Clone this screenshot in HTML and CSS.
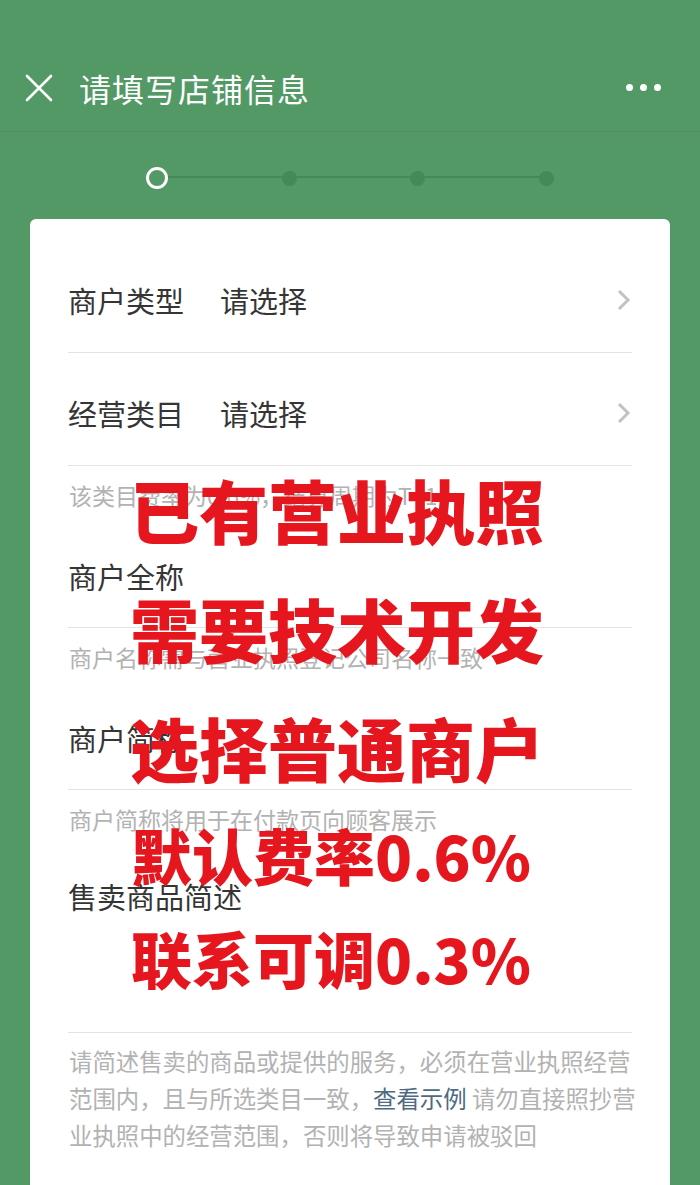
FILE: index.html
```html
<!DOCTYPE html>
<html lang="zh-CN">
<head>
<meta charset="utf-8">
<title>请填写店铺信息</title>
<link rel="stylesheet" href="styles.css">
</head>
<body>
<div class="page">
  <div class="statusbar"></div>
  <header class="nav">
    <svg class="close" width="28" height="28" viewBox="0 0 28 28"><path d="M2 2 L26 26 M26 2 L2 26" stroke="#fff" stroke-width="2.6" stroke-linecap="round" fill="none"/></svg>
    <h1 class="title">请填写店铺信息</h1>
    <div class="more"><span></span><span></span><span></span></div>
  </header>
  <div class="stepper">
    <div class="track">
      <span class="step current"></span>
      <span class="step"></span>
      <span class="step"></span>
      <span class="step"></span>
    </div>
  </div>
  <main class="card">
    <div class="row select">
      <span class="label">商户类型</span><span class="value">请选择</span>
      <svg class="chev" width="16" height="24" viewBox="0 0 16 24"><polyline points="3,3 12,12 3,21" fill="none" stroke="#c2c2c2" stroke-width="3"/></svg>
    </div>
    <div class="row select">
      <span class="label">经营类目</span><span class="value">请选择</span>
      <svg class="chev" width="16" height="24" viewBox="0 0 16 24"><polyline points="3,3 12,12 3,21" fill="none" stroke="#c2c2c2" stroke-width="3"/></svg>
    </div>
    <p class="hint">该类目费率为0.6%，结算周期为T+1</p>
    <div class="row field"><span class="label">商户全称</span></div>
    <p class="hint">商户名称需与营业执照登记公司名称一致</p>
    <div class="row field"><span class="label">商户简称</span></div>
    <p class="hint">商户简称将用于在付款页向顾客展示</p>
    <div class="row area"><span class="label">售卖商品简述</span></div>
    <p class="desc">请简述售卖的商品或提供的服务，必须在营业执照经营范围内，且与所选类目一致，<a class="link">查看示例</a> 请勿直接照抄营业执照中的经营范围，否则将导致申请被驳回</p>
  </main>
  <div class="overlay">
    <div class="big l1">已有营业执照</div>
    <div class="big l2">需要技术开发</div>
    <div class="big l3">选择普通商户</div>
    <div class="mid l4">默认费率0.6%</div>
    <div class="mid l5">联系可调0.3%</div>
  </div>
</div>
</body>
</html>
```
FILE: styles.css
```css
html, body {
  margin: 0;
  padding: 0;
}
body {
  background: #539966;
  font-family: "Noto Sans CJK SC", "Noto Sans", sans-serif;
  overflow: hidden;
  height: 1185px;
}
.page {
  position: relative;
  width: 700px;
  height: 1185px;
  overflow: hidden;
}
.statusbar {
  height: 44px;
}
.nav {
  height: 87px;
  display: flex;
  align-items: center;
  padding: 0 39px 0 25px;
  border-bottom: 1px solid rgba(0, 0, 0, 0.06);
}
.close {
  flex: none;
  display: block;
}
.title {
  margin: 0 0 0 26px;
  font-size: 32px;
  font-weight: 400;
  color: #fff;
  flex: 1;
  line-height: 40px;
  letter-spacing: 1px;
}
.more {
  display: flex;
  gap: 7px;
}
.more span {
  width: 7px;
  height: 7px;
  border-radius: 50%;
  background: #fff;
}
.stepper {
  height: 87px;
  display: flex;
  align-items: center;
}
.track {
  position: relative;
  margin-left: 146px;
  width: 408px;
  display: flex;
  justify-content: space-between;
  align-items: center;
  margin-top: 5px;
}
.track::before {
  content: "";
  position: absolute;
  left: 10px;
  right: 8px;
  top: 50%;
  height: 2px;
  margin-top: -2px;
  background: #438a58;
}
.step {
  position: relative;
  width: 15px;
  height: 15px;
  border-radius: 50%;
  background: #438a58;
}
.step.current {
  width: 16px;
  height: 16px;
  border: 3.5px solid #fff;
  background: #539966;
}
.card {
  margin: 0 30px;
  background: #fff;
  border-radius: 6px 6px 0 0;
  padding: 21px 38px 0;
  height: 1000px;
}
.row {
  display: flex;
  align-items: center;
  border-bottom: 1px solid #e3e3e3;
  color: #353535;
  font-size: 29px;
  line-height: 34px;
  box-sizing: border-box;
}
.row.select {
  height: 113px;
  padding-top: 8px;
}
.row.field {
  height: 106px;
  padding-top: 2px;
}
.row.area {
  height: 187px;
  align-items: flex-start;
}
.row.area .label {
  margin-top: 33px;
  width: auto;
}
.label {
  width: 152px;
  flex: none;
}
.value {
  flex: 1;
}
.chev {
  display: block;
  margin-right: 0;
}
.hint {
  margin: 0;
  padding: 17px 0 15px 1px;
  font-size: 23px;
  line-height: 24px;
  color: #b2b2b2;
}
.desc {
  margin: 0 -6px 0 0;
  padding: 10px 0 0 1px;
  font-size: 23.4px;
  line-height: 37px;
  color: #b2b2b2;
}
.link {
  color: #4d6a82;
}
.overlay {
  position: absolute;
  left: 130px;
  top: 450px;
  color: #e6161f;
  font-weight: 900;
  white-space: nowrap;
}
.big {
  font-size: 69px;
  line-height: 119px;
}
.mid {
  font-size: 61px;
  margin-left: 1px;
}
.l4 {
  line-height: 96px;
}
.l5 {
  line-height: 110px;
}
```
